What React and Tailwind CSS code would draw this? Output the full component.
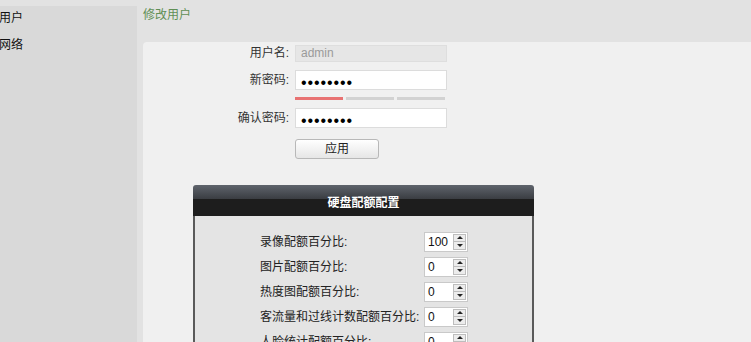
import React from "react";

const font = "font-['Liberation_Sans','Noto_Sans_CJK_SC',sans-serif]";

const quotaRows = [
  { label: "录像配额百分比:", value: "100" },
  { label: "图片配额百分比:", value: "0" },
  { label: "热度图配额百分比:", value: "0" },
  { label: "客流量和过线计数配额百分比:", value: "0" },
  { label: "人脸统计配额百分比:", value: "0" },
];

const Spinner = ({ value }) => (
  <div className="flex h-[20px] w-[44px] items-stretch border border-[#c9c9c9] bg-white">
    <div className="flex-1 pl-[3px] text-[12px] leading-[18px] text-[#111]">{value}</div>
    <div className="my-[1px] mr-[1px] flex w-[13px] flex-col border border-[#bdbdbd] bg-[#ececec]">
      <div className="flex flex-1 items-center justify-center border-b border-[#bdbdbd]">
        <span className="h-0 w-0 border-x-[3px] border-b-[3px] border-x-transparent border-b-[#222]" />
      </div>
      <div className="flex flex-1 items-center justify-center">
        <span className="h-0 w-0 border-x-[3px] border-t-[3px] border-x-transparent border-t-[#222]" />
      </div>
    </div>
  </div>
);

const Label = ({ children }) => (
  <div className="w-[152px] pr-[6px] text-right text-[12px] text-[#333]">{children}</div>
);

const Dots = () => (
  <span className="text-[16px] leading-[18px] tracking-[0.9px] text-black">••••••••</span>
);

export default function App() {
  return (
    <div className={`flex h-[342px] w-[751px] flex-col overflow-hidden bg-[#e2e2e2] ${font}`}>
      <div className="h-[3px] bg-[#1e1e1e]" />
      <div className="flex flex-1">
        <aside className="mt-[6px] w-[137px] bg-[#d9d9d9] pt-[4px] text-[12px] text-[#111]">
          <div className="-ml-[1px] mb-[10px] leading-[17px]">用户</div>
          <div className="-ml-[1px] mb-[10px] leading-[17px]">网络</div>
        </aside>
        <main className="flex flex-1 flex-col">
          <h2 className="ml-[6px] mt-[7px] mb-[19px] text-[12px] leading-[16px] font-normal text-[#5f8f55]">
            修改用户
          </h2>
          <div className="ml-[6px] flex-1 rounded-tl-[4px] bg-[#f0f0f0] pt-[2px]">
            <div className="flex flex-col">
              <div className="flex items-center">
                <Label>用户名:</Label>
                <div className="h-[17px] w-[152px] border border-[#dedede] bg-[#e6e6e6] pl-[5px] text-[12px] leading-[15px] text-[#9a9a9a]">
                  admin
                </div>
              </div>
              <div className="mt-[8px] flex items-center">
                <Label>新密码:</Label>
                <div className="h-[20px] w-[152px] border border-[#dcdcdc] bg-white pl-[5px]">
                  <Dots />
                </div>
              </div>
              <div className="ml-[152px] mt-[7px] flex gap-[3px]">
                <div className="h-[3px] w-[48px] bg-[#e87272]" />
                <div className="h-[3px] w-[48px] bg-[#d2d2d2]" />
                <div className="h-[3px] w-[48px] bg-[#d2d2d2]" />
              </div>
              <div className="mt-[8px] flex items-center">
                <Label>确认密码:</Label>
                <div className="h-[20px] w-[152px] border border-[#dcdcdc] bg-white pl-[5px]">
                  <Dots />
                </div>
              </div>
              <div className="ml-[152px] mt-[8px]">
                <button className="h-[20px] w-[84px] rounded-[3px] border border-[#b8b8b8] bg-linear-to-b from-white to-[#e6e6e6] text-[12px] leading-[18px] text-[#222]">
                  应用
                </button>
              </div>
            </div>

            <div className="ml-[50px] mt-[25px] w-[341px] overflow-hidden rounded-t-[3px]">
              <div className="flex h-[31px] items-center justify-center bg-[linear-gradient(to_bottom,#5f646c_0%,#3a3d42_45%,#1d1d1d_45%,#1d1d1d_100%)] pt-[4px] text-[12px] font-bold text-white">
                硬盘配额配置
              </div>
              <div className="h-[140px] border-x-2 border-[#5a5a5a] bg-[#e4e4e4] pt-[13px]">
                <div className="ml-[65px] flex flex-col">
                  {quotaRows.map((r) => (
                    <div key={r.label} className="flex h-[25px] items-center">
                      <div className="w-[164px] whitespace-nowrap text-[12px] text-[#222]">{r.label}</div>
                      <Spinner value={r.value} />
                    </div>
                  ))}
                </div>
              </div>
            </div>
          </div>
        </main>
      </div>
    </div>
  );
}
